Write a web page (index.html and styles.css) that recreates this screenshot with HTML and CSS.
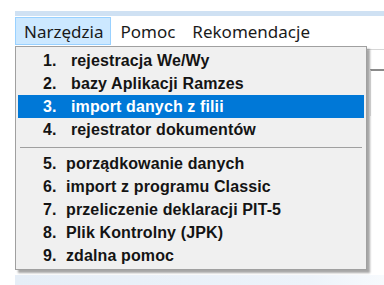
FILE: index.html
```html
<!DOCTYPE html>
<html lang="pl">
<head>
    <meta charset="UTF-8">
    <title>Narzędzia</title>
    <link rel="stylesheet" href="styles.css">
</head>
<body>
<div class="window">
    <div class="title-strip"></div>

    <!-- Menu bar -->
    <ul class="menubar">
        <li class="menu-item active">Narzędzia</li>
        <li class="menu-item">Pomoc</li>
        <li class="menu-item">Rekomendacje</li>
    </ul>

    <div class="workspace">
        <div class="toolbar-line"></div>
        <div class="panel"></div>
    </div>
    <div class="footer"></div>

    <!-- Dropdown -->
    <ul class="dropdown">
        <li class="entry"><span class="num">1.</span>rejestracja We/Wy</li>
        <li class="entry"><span class="num">2.</span>bazy Aplikacji Ramzes</li>
        <li class="entry selected"><span class="num">3.</span>import danych z filii</li>
        <li class="entry"><span class="num">4.</span>rejestrator dokumentów</li>
        <li class="separator"></li>
        <li class="entry short"><span class="num">5.</span>porządkowanie danych</li>
        <li class="entry short"><span class="num">6.</span>import z programu Classic</li>
        <li class="entry short"><span class="num">7.</span>przeliczenie deklaracji PIT-5</li>
        <li class="entry short"><span class="num">8.</span>Plik Kontrolny (JPK)</li>
        <li class="entry short"><span class="num">9.</span>zdalna pomoc</li>
    </ul>
</div>
</body>
</html>
```

FILE: styles.css
```css
body {
    margin: 0;
    padding: 11px 0 0 15px;
    background-color: #fff;
    font-family: "Liberation Sans", Arial, sans-serif;
    overflow: hidden;
}

.window {
    position: relative;
    width: 369px;
}

.title-strip {
    height: 5px;
    background-color: #cfe1f3;
}

/* Menu bar */
.menubar {
    list-style: none;
    margin: 0;
    padding: 1px 0 0;
    height: 29px;
    display: flex;
    background-color: #fff;
    font-family: "Noto Sans", sans-serif;
    font-size: 17px;
    color: #1a1a1a;
}

.menu-item {
    padding: 0 7px 0 8px;
    height: 28px;
    line-height: 27px;
    border: 1px solid transparent;
    box-sizing: border-box;
}

.menu-item.active {
    background-color: #cce8ff;
    border-color: #99d1ff;
}

.workspace {
    height: 229px;
    padding-top: 3px;
    box-sizing: border-box;
}

.toolbar-line {
    height: 1px;
    background-color: #d6d6d6;
}

.panel {
    margin: 19px 0 0 355px;
    height: 45px;
    border-top: 2px solid #8a8a8a;
    border-left: 1px solid #e2e2e2;
}

.footer {
    height: 10px;
    background: linear-gradient(to right, #e6eef7 0%, #edf3fa 80%, #f7fafd 100%);
}

/* Dropdown */
.dropdown {
    position: absolute;
    top: 35px;
    left: 0;
    width: 350px;
    margin: 0;
    padding: 2px 0;
    list-style: none;
    background-color: #f0f0f0;
    border: 1px solid #a0a0a0;
    box-shadow: 3px 3px 2px rgba(0, 0, 0, 0.35);
    font-size: 16px;
    font-weight: bold;
    letter-spacing: 0.12px;
    color: #141414;
}

.entry {
    height: 23px;
    line-height: 23px;
    margin: 0 2px;
    padding-left: 25px;
}

.entry .num {
    display: inline-block;
    width: 28px;
}

.entry.short .num {
    width: 23px;
}

.entry.selected {
    background-color: #0078d7;
    color: #fff;
}

.separator {
    height: 1px;
    margin: 6px 4px 4px;
    background-color: #a0a0a0;
}
```
